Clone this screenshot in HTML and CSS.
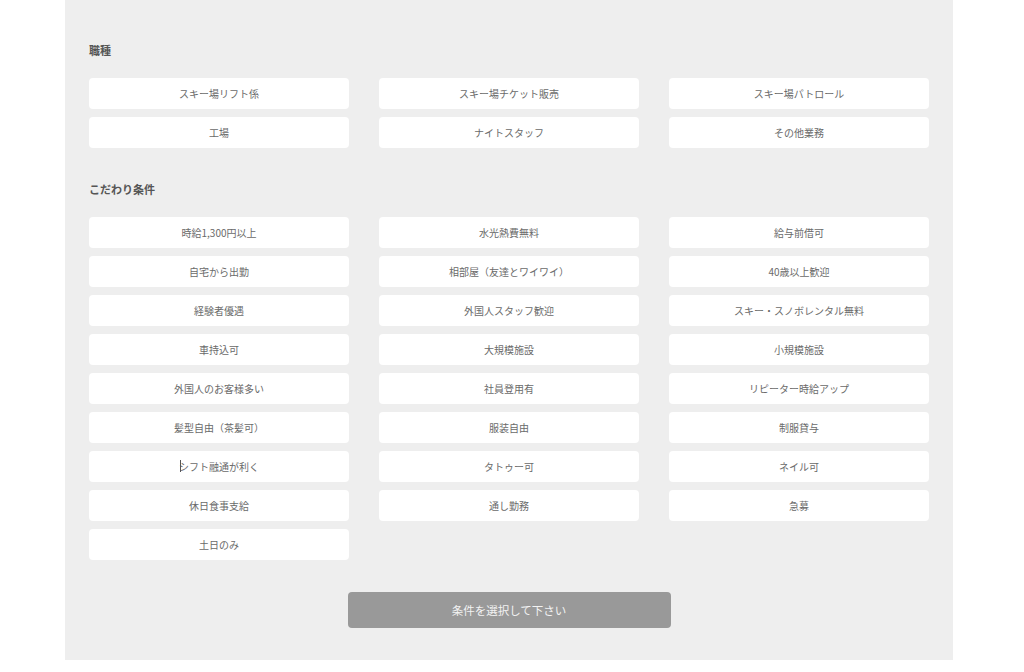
FILE: index.html
```html
<!DOCTYPE html>
<html lang="ja">
<head>
<meta charset="utf-8">
<title>条件選択</title>
<link rel="stylesheet" href="styles.css">
</head>
<body>
<div class="panel">
  <section class="group">
    <h2 class="group-title">職種</h2>
    <div class="options">
      <button class="opt">スキー場リフト係</button>
      <button class="opt">スキー場チケット販売</button>
      <button class="opt">スキー場パトロール</button>
      <button class="opt">工場</button>
      <button class="opt">ナイトスタッフ</button>
      <button class="opt">その他業務</button>
    </div>
  </section>
  <section class="group">
    <h2 class="group-title">こだわり条件</h2>
    <div class="options">
      <button class="opt">時給1,300円以上</button>
      <button class="opt">水光熱費無料</button>
      <button class="opt">給与前借可</button>
      <button class="opt">自宅から出勤</button>
      <button class="opt">相部屋（友達とワイワイ）</button>
      <button class="opt">40歳以上歓迎</button>
      <button class="opt">経験者優遇</button>
      <button class="opt">外国人スタッフ歓迎</button>
      <button class="opt">スキー・スノボレンタル無料</button>
      <button class="opt">車持込可</button>
      <button class="opt">大規模施設</button>
      <button class="opt">小規模施設</button>
      <button class="opt">外国人のお客様多い</button>
      <button class="opt">社員登用有</button>
      <button class="opt">リピーター時給アップ</button>
      <button class="opt">髪型自由（茶髪可）</button>
      <button class="opt">服装自由</button>
      <button class="opt">制服貸与</button>
      <button class="opt"><span class="caret-wrap"><span class="caret"></span>シフト融通が利く</span></button>
      <button class="opt">タトゥー可</button>
      <button class="opt">ネイル可</button>
      <button class="opt">休日食事支給</button>
      <button class="opt">通し勤務</button>
      <button class="opt">急募</button>
      <button class="opt">土日のみ</button>
    </div>
  </section>
  <div class="submit-row">
    <button class="submit">条件を選択して下さい</button>
  </div>
</div>
</body>
</html>
```

FILE: styles.css
```css
html, body {
  margin: 0;
  padding: 0;
  background: #ffffff;
}

body {
  font-family: "Noto Sans CJK JP", "Noto Sans", sans-serif;
  color: #666666;
}

.panel {
  width: 888px;
  margin-left: 65px;
  box-sizing: border-box;
  padding: 43px 24px 32px;
  background: #eeeeee;
}

.group + .group {
  margin-top: 34px;
}

.group-title {
  margin: 0 0 21px;
  font-size: 11px;
  line-height: 14px;
  font-weight: bold;
  color: #555555;
}

.options {
  display: grid;
  grid-template-columns: repeat(3, 260px);
  column-gap: 30px;
  row-gap: 8px;
}

.opt {
  height: 31px;
  margin: 0;
  padding: 0;
  border: none;
  border-radius: 4px;
  background: #ffffff;
  font-family: inherit;
  font-size: 10px;
  color: #6a6a6a;
  text-align: center;
  cursor: pointer;
}

.caret-wrap {
  position: relative;
}

.caret {
  position: absolute;
  left: 1px;
  top: 1px;
  width: 1px;
  height: 12px;
  background: #555555;
}

.submit-row {
  display: flex;
  justify-content: center;
  margin-top: 32px;
}

.submit {
  width: 323px;
  height: 36px;
  margin: 0;
  border: none;
  border-radius: 4px;
  background: #999999;
  color: #f2f2f2;
  font-family: inherit;
  font-size: 11.5px;
}
```
